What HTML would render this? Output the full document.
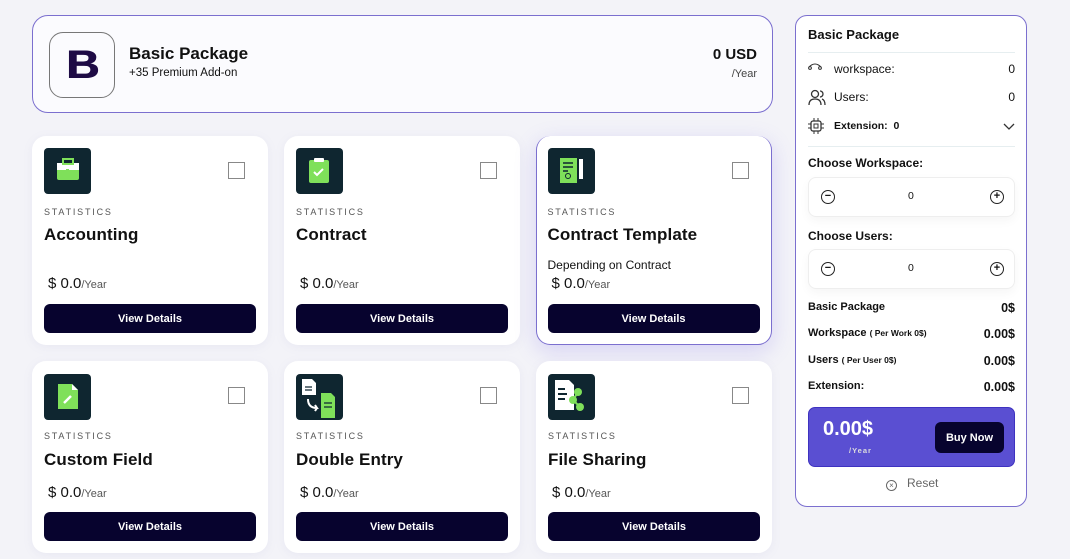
<!DOCTYPE html>
<html><head><meta charset="utf-8"><style>
*{box-sizing:border-box;margin:0;padding:0}
body{width:1070px;height:559px;background:#f3f3f8;font-family:"Liberation Sans",sans-serif;color:#111;position:relative;overflow:hidden}
.a{position:absolute}
.top{left:32px;top:15px;width:741px;height:98px;border:1.5px solid #7b6fcf;border-radius:16px;background:#fbfbfe}
.logo{left:16px;top:16px;width:66px;height:66px;border:1px solid #777;border-radius:14px;display:flex;align-items:center;justify-content:center;font-weight:900;font-size:40px;color:#1e0b45}
.logo span{display:inline-block;transform:scaleX(1.15);text-shadow:1px 0 0 #1e0b45}
.card{width:236px;background:#fff;border-radius:14px;box-shadow:0 2px 10px rgba(120,120,180,.08)}
.ic{left:12px;top:12px;width:47px;height:46px;background:#0f2630;border-radius:4px}
.cb{left:196px;top:26px;width:17px;height:17px;border:1.5px solid #888}
.st{left:12px;font-size:9px;letter-spacing:1.8px;color:#555}
.tt{left:12px;font-size:17px;font-weight:bold;color:#111;letter-spacing:.1px}
.pr{left:16px;font-size:15px;color:#111}
.pr small{font-size:11px;color:#555}
.btn{left:12px;width:212px;height:29px;background:#07032e;border-radius:6px;color:#fff;font-size:11px;font-weight:bold;display:flex;align-items:center;justify-content:center}
.side{left:795px;top:15px;width:232px;height:492px;border:1.5px solid #7b6fcf;border-radius:12px;background:#fff}
.sl{font-size:12px;color:#111}
.box{left:12px;width:207px;height:40px;border:1px solid #eee;border-radius:8px;box-shadow:0 4px 10px rgba(0,0,0,.04)}
.circ{width:14px;height:14px;border:1.5px solid #222;border-radius:50%;font-size:11px;line-height:10px;text-align:center;font-weight:bold}
.row{left:12px;width:207px;display:flex;justify-content:space-between;font-size:11px;font-weight:bold}
.row b{font-size:12.5px}
</style></head><body>
<div class="a top">
 <div class="a logo"><span>B</span></div>
 <div class="a" style="left:96px;top:28px;font-size:17px;font-weight:bold;color:#111">Basic Package</div>
 <div class="a" style="left:96px;top:51px;font-size:11.5px">+35 Premium Add-on</div>
 <div class="a" style="right:15px;top:30px;font-size:15px;font-weight:bold">0 USD</div>
 <div class="a" style="right:15px;top:52px;font-size:11px;color:#444">/Year</div>
</div>

<div class="a card" style="left:32px;top:136px;height:209px">
 <div class="a ic"><svg width="47" height="46"><rect x="13" y="15" width="22" height="17" rx="2" fill="#7fe05a"/><rect x="13" y="15" width="22" height="7" fill="#fff"/><rect x="19" y="11" width="10" height="5" fill="none" stroke="#7fe05a" stroke-width="2"/><rect x="22" y="21" width="3" height="3" fill="#7fe05a"/></svg></div>
 <div class="a cb"></div>
 <div class="a st" style="top:71px">STATISTICS</div>
 <div class="a tt" style="top:89px">Accounting</div>
 <div class="a pr" style="top:139px">$ 0.0<small>/Year</small></div>
 <div class="a btn" style="top:168px">View Details</div>
</div>
<div class="a card" style="left:284px;top:136px;height:209px">
 <div class="a ic"><svg width="47" height="46"><rect x="13" y="12" width="20" height="23" rx="2" fill="#7fe05a"/><rect x="18" y="10" width="10" height="4" rx="1" fill="#fff"/><path d="M18 24l3 3 6-6" stroke="#fff" stroke-width="2" fill="none"/></svg></div>
 <div class="a cb"></div>
 <div class="a st" style="top:71px">STATISTICS</div>
 <div class="a tt" style="top:89px">Contract</div>
 <div class="a pr" style="top:139px">$ 0.0<small>/Year</small></div>
 <div class="a btn" style="top:168px">View Details</div>
</div>
<div class="a card" style="left:536px;top:136px;height:209px;border:1.5px solid #7b6fcf;border-top:none;box-shadow:0 6px 22px rgba(110,90,230,.22)">
 <div style="position:absolute;left:-1.5px;top:0;width:236px;height:209px">
 <div class="a ic"><svg width="47" height="46"><rect x="12" y="10" width="17" height="25" fill="#7fe05a"/><path d="M15 15h10M15 19h10M15 23h5" stroke="#0f2630" stroke-width="1.5"/><circle cx="20" cy="28" r="2.5" fill="none" stroke="#0f2630"/><rect x="31" y="11" width="4" height="20" fill="#fff"/></svg></div>
 <div class="a cb"></div>
 <div class="a st" style="top:71px">STATISTICS</div>
 <div class="a tt" style="top:89px">Contract Template</div>
 <div class="a" style="left:12px;top:122px;font-size:12px">Depending on Contract</div>
 <div class="a pr" style="top:139px">$ 0.0<small>/Year</small></div>
 <div class="a btn" style="top:168px">View Details</div>
 </div>
</div>

<div class="a card" style="left:32px;top:361px;height:192px">
 <div class="a ic" style="top:13px"><svg width="47" height="46"><path d="M14 10h14l6 6v19H14z" fill="#7fe05a"/><path d="M28 10v6h6" fill="#fff"/><path d="M20 29l7-7" stroke="#fff" stroke-width="2.5"/></svg></div>
 <div class="a cb"></div>
 <div class="a st" style="top:70px">STATISTICS</div>
 <div class="a tt" style="top:89px">Custom Field</div>
 <div class="a pr" style="top:123px">$ 0.0<small>/Year</small></div>
 <div class="a btn" style="top:151px">View Details</div>
</div>
<div class="a card" style="left:284px;top:361px;height:192px">
 <div class="a ic" style="top:13px"><svg width="47" height="46"><path d="M6 5h10l4 4v12H6z" fill="#fff"/><path d="M9 13h7M9 16h7" stroke="#0f2630" stroke-width="1.3"/><path d="M25 19h10l4 4v21H25z" fill="#7fe05a"/><path d="M28 29h8M28 33h8" stroke="#0f2630" stroke-width="1.3"/><path d="M12 25q0 9 9 9l-2-3m2 3l-2 3" stroke="#fff" stroke-width="2" fill="none"/></svg></div>
 <div class="a cb"></div>
 <div class="a st" style="top:70px">STATISTICS</div>
 <div class="a tt" style="top:89px">Double Entry</div>
 <div class="a pr" style="top:123px">$ 0.0<small>/Year</small></div>
 <div class="a btn" style="top:151px">View Details</div>
</div>
<div class="a card" style="left:536px;top:361px;height:192px">
 <div class="a ic" style="top:13px"><svg width="47" height="46"><path d="M7 6h14l5 5v25H7z" fill="#fff"/><path d="M10 15h7M10 20h9M10 25h7" stroke="#0f2630" stroke-width="2"/><circle cx="30" cy="18" r="4" fill="#7fe05a"/><circle cx="25" cy="26" r="4" fill="#7fe05a"/><circle cx="32" cy="33" r="4" fill="#7fe05a"/><path d="M30 18L25 26L32 33" stroke="#7fe05a" stroke-width="2" fill="none"/></svg></div>
 <div class="a cb"></div>
 <div class="a st" style="top:70px">STATISTICS</div>
 <div class="a tt" style="top:89px">File Sharing</div>
 <div class="a pr" style="top:123px">$ 0.0<small>/Year</small></div>
 <div class="a btn" style="top:151px">View Details</div>
</div>

<div class="a side">
 <div class="a" style="left:12px;top:11px;font-size:13px;font-weight:bold">Basic Package</div>
 <div class="a" style="left:12px;top:36px;width:207px;border-top:1px solid #e6eef0"></div>
 <svg class="a" style="left:12px;top:46px" width="14" height="8"><path d="M1 5Q7 -1 13 5" stroke="#333" fill="none"/><circle cx="2" cy="6" r="1.4" fill="none" stroke="#333"/><circle cx="12" cy="6" r="1.4" fill="none" stroke="#333"/></svg>
 <div class="a sl" style="left:38px;top:46px">workspace:</div><div class="a sl" style="right:11px;top:46px">0</div>
 <svg class="a" style="left:12px;top:73px" width="18" height="17"><circle cx="7" cy="5" r="3.5" fill="none" stroke="#333" stroke-width="1.3"/><path d="M1 16q0-6 6-6t6 6M12 2a3 3 0 010 6M14 10q3 1 3 6" fill="none" stroke="#333" stroke-width="1.3"/></svg>
 <div class="a sl" style="left:38px;top:74px">Users:</div><div class="a sl" style="right:11px;top:74px">0</div>
 <svg class="a" style="left:12px;top:102px" width="16" height="16"><rect x="3" y="3" width="10" height="10" rx="2" fill="none" stroke="#333" stroke-width="1.3"/><rect x="6" y="6" width="4" height="4" fill="none" stroke="#333"/><path d="M6 0v3M10 0v3M6 13v3M10 13v3M0 6h3M0 10h3M13 6h3M13 10h3" stroke="#333"/></svg>
 <div class="a" style="left:38px;top:104px;font-size:10.5px;font-weight:bold">Extension:&nbsp; 0</div>
 <svg class="a" style="left:207px;top:107px" width="12" height="8"><path d="M1 1l5 5 5-5" stroke="#333" fill="none" stroke-width="1.3"/></svg>
 <div class="a" style="left:12px;top:130px;width:207px;border-top:1px solid #e6eef0"></div>
 <div class="a" style="left:12px;top:140px;font-size:12px;font-weight:bold">Choose Workspace:</div>
 <div class="a box" style="top:161px"><div class="a circ" style="left:12px;top:12px">−</div><div class="a" style="left:99px;top:12px;font-size:10.5px">0</div><div class="a circ" style="right:10px;top:12px">+</div></div>
 <div class="a" style="left:12px;top:213px;font-size:12px;font-weight:bold">Choose Users:</div>
 <div class="a box" style="top:233px"><div class="a circ" style="left:12px;top:12px">−</div><div class="a" style="left:99px;top:12px;font-size:10.5px">0</div><div class="a circ" style="right:10px;top:12px">+</div></div>
 <div class="a row" style="top:285px"><span>Basic Package</span><b>0$</b></div>
 <div class="a row" style="top:311px"><span>Workspace <span style="font-size:8.5px">( Per Work 0$)</span></span><b>0.00$</b></div>
 <div class="a row" style="top:338px"><span>Users <span style="font-size:8.5px">( Per User 0$)</span></span><b>0.00$</b></div>
 <div class="a row" style="top:364px"><span>Extension:</span><b>0.00$</b></div>
 <div class="a" style="left:12px;top:391px;width:207px;height:60px;background:#5a4fd2;border:1.5px solid #3e32c0;border-radius:7px">
  <div class="a" style="left:14px;top:10px;color:#fff;font-size:20px;font-weight:bold">0.00$</div>
  <div class="a" style="left:40px;top:38px;color:#ddd;font-size:7.5px;letter-spacing:1px;font-weight:bold">/Year</div>
  <div class="a" style="left:126px;top:14px;width:69px;height:31px;background:#07032e;border-radius:6px;color:#fff;font-size:11px;font-weight:bold;display:flex;align-items:center;justify-content:center">Buy Now</div>
 </div>
 <div class="a" style="left:90px;top:460px;font-size:12px;color:#666"><span style="display:inline-block;width:11px;height:11px;border:1px solid #666;border-radius:50%;font-size:8px;line-height:9px;text-align:center;vertical-align:-1px">×</span>&nbsp;&nbsp; Reset</div>
</div>
</body></html>
